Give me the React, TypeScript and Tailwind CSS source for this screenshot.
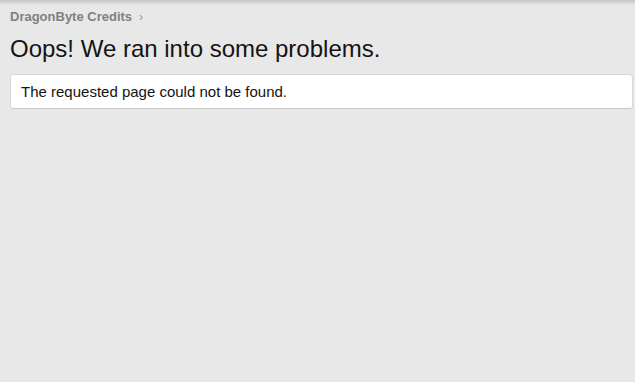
export default function App() {
  return (
    <div className="min-h-[382px] w-full bg-[#e8e8e8] relative" style={{ fontFamily: '"Liberation Sans", Arial, sans-serif' }}>
      <div className="absolute left-0 right-0 top-0 h-[5px] bg-gradient-to-b from-[#c4c4c4] to-[#e8e8e8]" />
      <div className="pl-[10px] pr-[2px] pt-[8px]">
        <div className="flex items-center gap-[7px] text-[13px] font-bold text-[#808080] leading-[18px]">
          <span>DragonByte Credits</span>
          <span className="font-normal text-[#999] text-[12px]">›</span>
        </div>
        <h1 className="mt-[9px] text-[24px] leading-[28px] text-[#141414]">Oops! We ran into some problems.</h1>
        <div className="mt-[11px] rounded-[3px] border border-[#d8d8d8] border-b-[#c8c8c8] bg-white px-[10px] py-[8px] text-[15px] leading-[17px] text-[#141414]">
          The requested page could not be found.
        </div>
      </div>
    </div>
  );
}
